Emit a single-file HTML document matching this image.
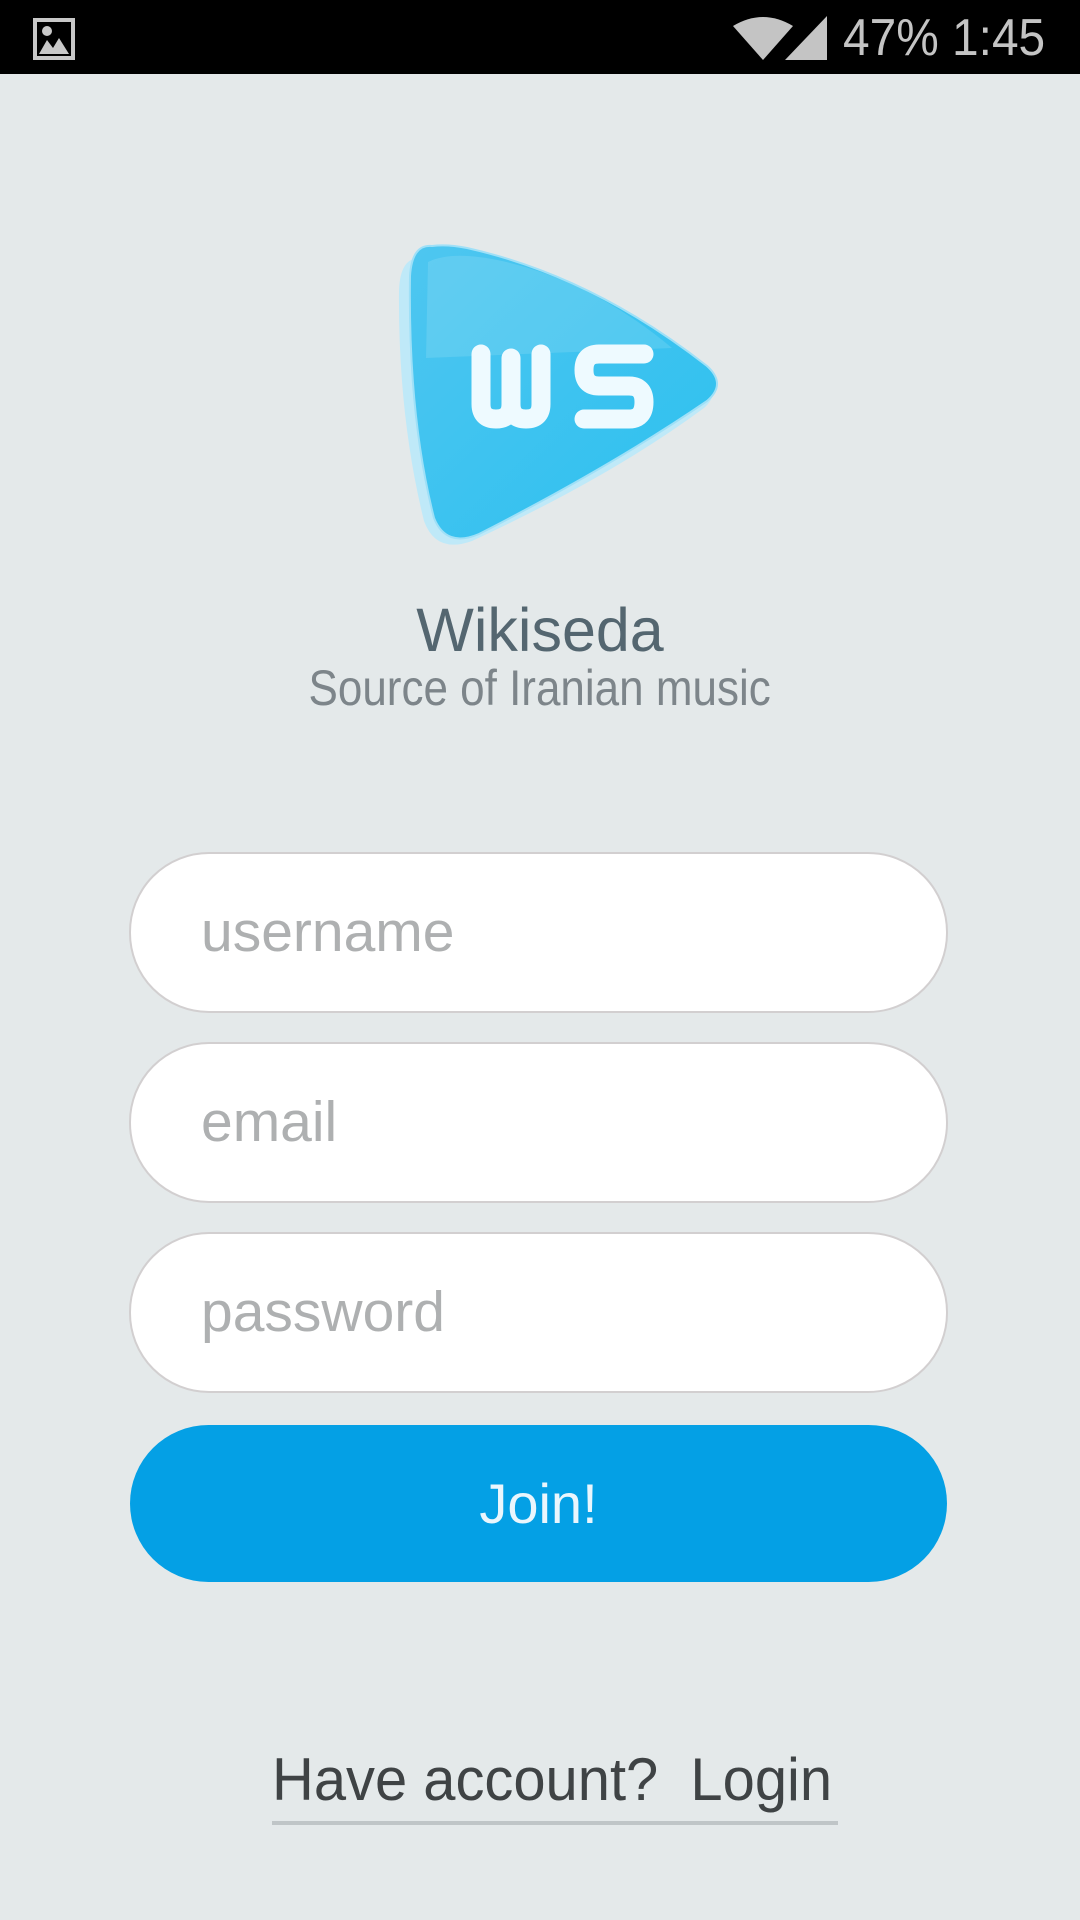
<!DOCTYPE html>
<html><head><meta charset="utf-8"><style>
body{margin:0;width:1080px;height:1920px;background:#e4e9ea;position:relative;overflow:hidden;font-family:"Liberation Sans",sans-serif}
.sb{position:absolute;left:0;top:0;width:1080px;height:74px;background:#000}
.abs{position:absolute}
.inp{position:absolute;left:129px;width:815px;height:157px;border:2px solid #d2cfd0;border-radius:80px;background:#fff;box-sizing:content-box}
.ph{position:absolute;left:70px;top:0;line-height:157px;font-size:57px;color:#aeb0b1}
</style></head><body>
<div class="sb">
<svg class="abs" style="left:33px;top:18px" width="42" height="42" viewBox="0 0 42 42"><rect x="2" y="2" width="38" height="38" fill="none" stroke="#c8c8c8" stroke-width="4"/><circle cx="14" cy="13" r="5" fill="#c8c8c8"/><path d="M6 36 L14 22 L20 30 L26 20 L36 36 Z" fill="#c8c8c8"/></svg>
<svg class="abs" style="left:733px;top:14px" width="96" height="48" viewBox="0 0 96 48"><path d="M0 12 Q30 -6 60 12 L30 46 Z" fill="#c4c4c4"/><path d="M94 2 L94 46 L52 46 Z" fill="#c4c4c4"/></svg>
<div class="abs" style="left:843px;top:8px;font-size:52px;color:#c4c4c4;line-height:60px;transform:scaleX(0.92);transform-origin:left">47% 1:45</div>
</div>
<svg class="abs" style="left:392px;top:236px" width="330" height="315" viewBox="0 0 330 315">
<defs><linearGradient id="g" x1="0" y1="0" x2="1" y2="1"><stop offset="0" stop-color="#4ec6f0"/><stop offset="1" stop-color="#2cc0ef"/></linearGradient></defs>
<path d="M30 22 Q8 20 7 55 Q6 180 32 285 Q44 318 80 305 Q220 240 312 172 Q330 156 312 140 Q200 50 70 20 Q48 16 30 22 Z" fill="#bfe9f8"/>
<path d="M40 10 Q20 8 18 40 Q16 180 42 282 Q54 312 87 298 Q220 230 315 165 Q335 148 315 130 Q200 40 75 12 Q55 8 40 10 Z" fill="url(#g)"/>
<path d="M36 26 Q60 14 110 25 Q200 45 280 112 L34 122 Z" fill="#ffffff" opacity="0.12"/>
<path d="M40 10 Q20 8 18 40 Q16 180 42 282 Q54 312 87 298 Q220 230 315 165 Q335 148 315 130 Q200 40 75 12 Q55 8 40 10 Z" fill="none" stroke="#9fe0f7" stroke-width="2"/>
<g fill="none" stroke="#eefaff" stroke-width="19" stroke-linecap="round" stroke-linejoin="round">
<path d="M89 118 L89 168 Q89 183 104 183 Q119 183 119 168 L119 122 M119 168 Q119 183 134 183 Q149 183 149 168 L149 118"/>
<path d="M252 118 L207 118 Q192 118 192 134 Q192 150 207 150 L237 150 Q252 150 252 166 Q252 183 237 183 L192 183"/>
</g>
</svg>
<div class="abs" style="left:0;width:1080px;top:594px;text-align:center;font-size:61px;color:#546670;line-height:72px">Wikiseda</div>
<div class="abs" style="left:0;width:1080px;top:660px;text-align:center;font-size:50px;color:#7d858a;line-height:56px"><span style="display:inline-block;transform:scaleX(0.88)">Source of Iranian music</span></div>
<div class="inp" style="top:852px"><div class="ph">username</div></div>
<div class="inp" style="top:1042px"><div class="ph">email</div></div>
<div class="inp" style="top:1232px"><div class="ph">password</div></div>
<div class="abs" style="left:130px;top:1425px;width:817px;height:157px;border-radius:80px;background:#04a0e5;color:#eaf6fd;text-align:center;line-height:157px;font-size:56px">Join!</div>
<div class="abs" style="left:272px;top:1745px;font-size:60px;color:#3f4345;line-height:70px;white-space:pre;transform:scaleX(0.965);transform-origin:left">Have account?  Login</div>
<div class="abs" style="left:272px;top:1821px;width:566px;height:4px;background:#bfc5c7"></div>
</body></html>
